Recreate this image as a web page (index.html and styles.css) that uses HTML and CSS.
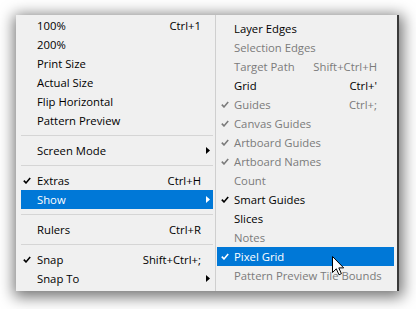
FILE: index.html
```html
<!DOCTYPE html>
<html>
<head>
<meta charset="utf-8">
<link rel="stylesheet" href="styles.css">
</head>
<body>
<div class="stage">
  <div class="menus">
    <ul class="menu main">
      <li class="item"><span class="chk"></span><span class="label">100%</span><span class="key">Ctrl+1</span><span class="sub"></span></li>
      <li class="item"><span class="chk"></span><span class="label">200%</span><span class="sub"></span></li>
      <li class="item"><span class="chk"></span><span class="label">Print Size</span><span class="sub"></span></li>
      <li class="item"><span class="chk"></span><span class="label">Actual Size</span><span class="sub"></span></li>
      <li class="item"><span class="chk"></span><span class="label">Flip Horizontal</span><span class="sub"></span></li>
      <li class="item"><span class="chk"></span><span class="label">Pattern Preview</span><span class="sub"></span></li>
      <li class="sep"></li>
      <li class="item"><span class="chk"></span><span class="label">Screen Mode</span><span class="sub"><svg width="4" height="7" viewBox="0 0 4 7"><polygon points="0,0 4,3.5 0,7"/></svg></span></li>
      <li class="sep"></li>
      <li class="item"><span class="chk"><svg width="8" height="7" viewBox="0 0 8 7"><path d="M0.8 3.6 L3 5.9 L7.2 0.9"/></svg></span><span class="label">Extras</span><span class="key">Ctrl+H</span><span class="sub"></span></li>
      <li class="item active"><span class="chk"></span><span class="label">Show</span><span class="sub"><svg width="4" height="7" viewBox="0 0 4 7"><polygon points="0,0 4,3.5 0,7"/></svg></span></li>
      <li class="sep"></li>
      <li class="item"><span class="chk"></span><span class="label">Rulers</span><span class="key">Ctrl+R</span><span class="sub"></span></li>
      <li class="sep"></li>
      <li class="item"><span class="chk"><svg width="8" height="7" viewBox="0 0 8 7"><path d="M0.8 3.6 L3 5.9 L7.2 0.9"/></svg></span><span class="label">Snap</span><span class="key">Shift+Ctrl+;</span><span class="sub"></span></li>
      <li class="item"><span class="chk"></span><span class="label">Snap To</span><span class="sub"><svg width="4" height="7" viewBox="0 0 4 7"><polygon points="0,0 4,3.5 0,7"/></svg></span></li>
    </ul>
    <ul class="menu submenu">
      <li class="item"><span class="chk"></span><span class="label">Layer Edges</span><span class="sub"></span></li>
      <li class="item off"><span class="chk"></span><span class="label">Selection Edges</span><span class="sub"></span></li>
      <li class="item off"><span class="chk"></span><span class="label">Target Path</span><span class="key">Shift+Ctrl+H</span><span class="sub"></span></li>
      <li class="item"><span class="chk"></span><span class="label">Grid</span><span class="key">Ctrl+'</span><span class="sub"></span></li>
      <li class="item off"><span class="chk"><svg width="8" height="7" viewBox="0 0 8 7"><path d="M0.8 3.6 L3 5.9 L7.2 0.9"/></svg></span><span class="label">Guides</span><span class="key">Ctrl+;</span><span class="sub"></span></li>
      <li class="item off"><span class="chk"><svg width="8" height="7" viewBox="0 0 8 7"><path d="M0.8 3.6 L3 5.9 L7.2 0.9"/></svg></span><span class="label">Canvas Guides</span><span class="sub"></span></li>
      <li class="item off"><span class="chk"><svg width="8" height="7" viewBox="0 0 8 7"><path d="M0.8 3.6 L3 5.9 L7.2 0.9"/></svg></span><span class="label">Artboard Guides</span><span class="sub"></span></li>
      <li class="item off"><span class="chk"><svg width="8" height="7" viewBox="0 0 8 7"><path d="M0.8 3.6 L3 5.9 L7.2 0.9"/></svg></span><span class="label">Artboard Names</span><span class="sub"></span></li>
      <li class="item off"><span class="chk"></span><span class="label">Count</span><span class="sub"></span></li>
      <li class="item"><span class="chk"><svg width="8" height="7" viewBox="0 0 8 7"><path d="M0.8 3.6 L3 5.9 L7.2 0.9"/></svg></span><span class="label">Smart Guides</span><span class="sub"></span></li>
      <li class="item"><span class="chk"></span><span class="label">Slices</span><span class="sub"></span></li>
      <li class="item off"><span class="chk"></span><span class="label">Notes</span><span class="sub"></span></li>
      <li class="item active"><span class="chk"><svg width="8" height="7" viewBox="0 0 8 7"><path d="M0.8 3.6 L3 5.9 L7.2 0.9"/></svg></span><span class="label">Pixel Grid</span><span class="sub"></span></li>
      <li class="item off"><span class="chk"></span><span class="label">Pattern Preview Tile Bounds</span><span class="sub"></span></li>
    </ul>
  </div>
  <svg class="cursor" width="13" height="20" viewBox="0 0 13 20"><path d="M0.5 0.5 L0.5 16.5 L4.3 12.8 L7 18.8 L9.4 17.7 L6.8 11.9 L11.7 11.9 Z"/></svg>
</div>
</body>
</html>
```
FILE: styles.css
```css
html, body {
  margin: 0;
  background: #ffffff;
}
body {
  font-family: "Open Sans", "Noto Sans", sans-serif;
  font-size: 11.3px;
  color: #000;
}
.stage {
  position: relative;
  padding: 15px 0 0 16px;
  width: 416px;
  height: 309px;
  box-sizing: border-box;
}
.menus {
  display: flex;
  width: fit-content;
  box-shadow: 1px 3px 14px 3px rgba(0, 0, 0, 0.55);
}
.menu {
  list-style: none;
  margin: 0;
  background: #f0f0f0;
  box-sizing: border-box;
}
.main {
  width: 201px;
  padding: 1px 4px 3px 5px;
}
.submenu {
  position: relative;
  margin-left: -2px;
  width: 184px;
  padding: 4px 3px 6px 1px;
  border-left: 1px solid #cfcfcf;
  border-right: 2px solid #3a3a3a;
}
.item {
  display: flex;
  align-items: center;
  height: 19px;
  white-space: nowrap;
}
.chk {
  flex: 0 0 auto;
  display: flex;
  align-items: center;
  width: 16px;
  height: 19px;
  padding-left: 2px;
  box-sizing: border-box;
}
.submenu .chk {
  width: 17px;
  padding-left: 4px;
}
.chk svg {
  fill: none;
  stroke: #000;
  stroke-width: 1.6;
}
.label {
  flex: 1 0 auto;
}
.key {
  flex: 0 0 auto;
  margin-left: 8px;
}
.sub {
  flex: 0 0 auto;
  width: 12px;
  height: 19px;
  display: flex;
  align-items: center;
  justify-content: flex-end;
  padding-right: 3px;
  box-sizing: border-box;
}
.submenu .sub {
  width: 17px;
}
.sub svg {
  fill: #000;
}
.off {
  color: #7b7b7b;
}
.off .chk svg {
  stroke: #7b7b7b;
}
.active {
  background: #0078d7;
  color: #fff;
}
.active .chk svg {
  stroke: #fff;
}
.active .sub svg {
  fill: #fff;
}
.sep {
  height: 1px;
  background: #d5d5d5;
  margin: 5px 0 5px 0;
}
.cursor {
  position: absolute;
  left: 332px;
  top: 256px;
}
.cursor path {
  fill: #fff;
  stroke: #000;
  stroke-width: 1;
  stroke-linejoin: miter;
}
```
